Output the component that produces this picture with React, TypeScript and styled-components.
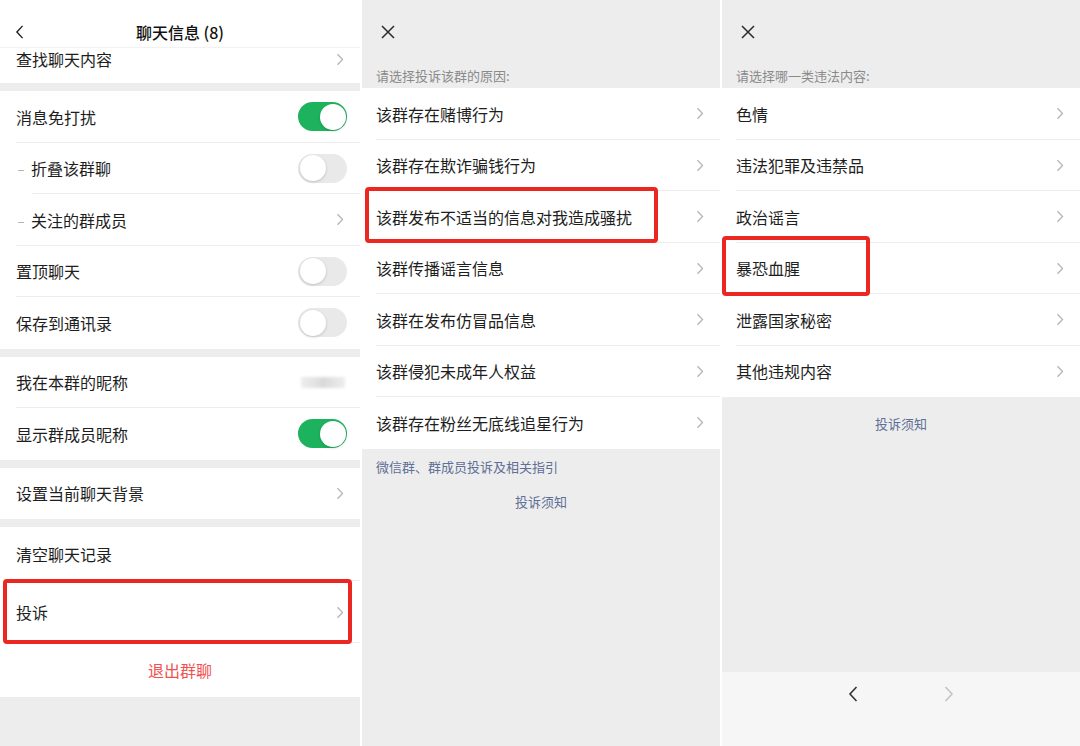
import React from 'react';
import styled, { createGlobalStyle } from 'styled-components';

const GlobalStyle = createGlobalStyle`
  html, body {
    margin: 0;
    padding: 0;
    background: #fff;
  }
  body {
    font-family: "Noto Sans CJK SC", "Noto Sans", "Liberation Sans", sans-serif;
    -webkit-font-smoothing: antialiased;
  }
`;

const Screen = styled.div`
  display: flex;
  gap: 2px;
  width: 1080px;
  height: 746px;
  background: #fff;
  overflow: hidden;
`;

const Panel = styled.div<{ $w: number }>`
  position: relative;
  display: flex;
  flex-direction: column;
  width: ${p => p.$w}px;
  flex-shrink: 0;
  background: #ededed;
`;

/* panel 1 */

const NavBar = styled.div`
  position: relative;
  display: flex;
  align-items: center;
  justify-content: center;
  height: 48px;
  padding-top: 16px;
  background: #fff;
  border-bottom: 1px solid #f2f2f2;
  box-sizing: border-box;
`;

const NavBack = styled.div`
  position: absolute;
  left: 15px;
  top: 25px;
  display: flex;
`;

const NavTitle = styled.div`
  font-size: 16px;
  font-weight: 500;
  color: #111;
`;

const Section = styled.div<{ $gap?: number }>`
  display: flex;
  flex-direction: column;
  margin-top: ${p => p.$gap ?? 8}px;
  background: #fff;
`;

const Row = styled.div<{ $h?: number; $indent?: number; $pad?: number; $lift?: number }>`
  position: relative;
  display: flex;
  align-items: center;
  height: ${p => p.$h ?? 51.5}px;
  padding: 0 16px ${p => p.$lift ?? 0}px ${p => p.$pad ?? 16}px;
  background: #fff;
  font-size: 16px;
  color: #1e1e1e;
  box-sizing: border-box;

  &:not(:last-child)::after {
    content: '';
    position: absolute;
    left: ${p => p.$indent ?? 16}px;
    right: 0;
    bottom: 0;
    height: 1px;
    background: #ededed;
  }
`;

const Label = styled.span`
  flex: 1;
  white-space: nowrap;
`;

const SubDash = styled.span`
  display: inline-block;
  width: 6px;
  height: 1px;
  margin: 0 7px 0 3px;
  background: #b5b5b5;
  vertical-align: middle;
`;

const Toggle = styled.div<{ $on?: boolean }>`
  position: relative;
  width: 49px;
  height: 29px;
  margin-right: -3px;
  border-radius: 15px;
  background: ${p => (p.$on ? '#1db35e' : '#e9e9e9')};

  &::after {
    content: '';
    position: absolute;
    top: 1.5px;
    ${p => (p.$on ? 'right: 1.5px;' : 'left: 1.5px;')}
    width: 26px;
    height: 26px;
    border-radius: 50%;
    background: #fff;
    box-shadow: 0 1px 3px rgba(0, 0, 0, 0.18);
  }
`;

const BlurredName = styled.div`
  width: 44px;
  height: 11px;
  margin-right: -1px;
  background: linear-gradient(90deg, #ededed 0%, #e2e2e2 35%, #d9d9d9 50%, #eeeeee 100%);
  filter: blur(1.5px);
`;

const DangerRow = styled(Row)`
  justify-content: center;
  color: #f05151;
`;

const Highlight = styled.div`
  position: absolute;
  border: 4px solid #ec2620;
  border-radius: 4px;
  box-sizing: border-box;
  pointer-events: none;
  z-index: 2;
`;

/* panels 2 & 3 */

const TopBar = styled.div`
  display: flex;
  align-items: center;
  height: 64px;
  padding-left: 19px;
`;

const Hint = styled.div`
  padding-left: 14px;
  font-size: 13px;
  line-height: 24px;
  color: #8a8a8a;
`;

const List = styled.div`
  display: flex;
  flex-direction: column;
  background: #fff;
`;

const LinkText = styled.div<{ $center?: boolean; $mt: number }>`
  margin-top: ${p => p.$mt}px;
  padding-left: ${p => (p.$center ? 0 : 14)}px;
  text-align: ${p => (p.$center ? 'center' : 'left')};
  font-size: 13px;
  line-height: 20px;
  color: #5f6f96;
`;

const Toolbar = styled.div`
  display: flex;
  justify-content: center;
  align-items: flex-start;
  gap: 86px;
  height: 74px;
  margin-top: auto;
  padding-top: 14px;
  box-sizing: border-box;
  background: #f6f6f6;
`;

const Chevron = ({ color = '#b5b5b5' }: { color?: string }) => (
  <svg width="8" height="13" viewBox="0 0 8 13" fill="none">
    <path d="M1.5 1.2L6.5 6.5L1.5 11.8" stroke={color} strokeWidth="1.3" />
  </svg>
);

const BackArrow = ({ color = '#222', w = 10, h = 16 }: { color?: string; w?: number; h?: number }) => (
  <svg width={w} height={h} viewBox="0 0 10 16" fill="none">
    <path d="M8.5 1L2 8L8.5 15" stroke={color} strokeWidth="1.6" />
  </svg>
);

const NextArrow = ({ color }: { color: string }) => (
  <svg width="10" height="16" viewBox="0 0 10 16" fill="none">
    <path d="M1.5 1L8 8L1.5 15" stroke={color} strokeWidth="1.6" />
  </svg>
);

const CloseIcon = () => (
  <svg width="14" height="14" viewBox="0 0 14 14" fill="none">
    <path d="M1 1L13 13M13 1L1 13" stroke="#2a2a2a" strokeWidth="1.5" />
  </svg>
);

const reasons = [
  '该群存在赌博行为',
  '该群存在欺诈骗钱行为',
  '该群发布不适当的信息对我造成骚扰',
  '该群传播谣言信息',
  '该群在发布仿冒品信息',
  '该群侵犯未成年人权益',
  '该群存在粉丝无底线追星行为',
];

const categories = ['色情', '违法犯罪及违禁品', '政治谣言', '暴恐血腥', '泄露国家秘密', '其他违规内容'];

export default function App() {
  return (
    <>
      <GlobalStyle />
      <Screen>
        <Panel $w={360}>
          <NavBar>
            <NavBack>
              <BackArrow w={9} h={14} />
            </NavBack>
            <NavTitle>聊天信息 (8)</NavTitle>
          </NavBar>
          <Section $gap={0}>
            <Row $h={35} $lift={13}>
              <Label>查找聊天内容</Label>
              <Chevron />
            </Row>
          </Section>

          <Section>
            <Row>
              <Label>消息免打扰</Label>
              <Toggle $on />
            </Row>
            <Row $indent={32} $pad={15}>
              <Label>
                <SubDash />
                折叠该群聊
              </Label>
              <Toggle />
            </Row>
            <Row $pad={15}>
              <Label>
                <SubDash />
                关注的群成员
              </Label>
              <Chevron />
            </Row>
            <Row>
              <Label>置顶聊天</Label>
              <Toggle />
            </Row>
            <Row>
              <Label>保存到通讯录</Label>
              <Toggle />
            </Row>
          </Section>

          <Section>
            <Row>
              <Label>我在本群的昵称</Label>
              <BlurredName />
            </Row>
            <Row>
              <Label>显示群成员昵称</Label>
              <Toggle $on />
            </Row>
          </Section>

          <Section>
            <Row>
              <Label>设置当前聊天背景</Label>
              <Chevron />
            </Row>
          </Section>

          <Section>
            <Row $h={54}>
              <Label>清空聊天记录</Label>
            </Row>
            <Row $h={62}>
              <Label>投诉</Label>
              <Chevron />
              <Highlight style={{ left: 3, right: 8, top: -2, bottom: -1 }} />
            </Row>
            <DangerRow $h={54} $lift={-3}>退出群聊</DangerRow>
          </Section>
        </Panel>

        <Panel $w={358}>
          <TopBar>
            <CloseIcon />
          </TopBar>
          <Hint>请选择投诉该群的原因:</Hint>
          <List>
            {reasons.map((r, i) => (
              <Row key={r} $pad={14} $indent={14}>
                <Label>{r}</Label>
                <Chevron />
                {i === 2 && <Highlight style={{ left: 3, width: 293, top: -4, height: 56 }} />}
              </Row>
            ))}
          </List>
          <LinkText $mt={8}>微信群、群成员投诉及相关指引</LinkText>
          <LinkText $mt={15} $center>
            投诉须知
          </LinkText>
        </Panel>

        <Panel $w={358}>
          <TopBar>
            <CloseIcon />
          </TopBar>
          <Hint>请选择哪一类违法内容:</Hint>
          <List>
            {categories.map((c, i) => (
              <Row key={c} $pad={14} $indent={14}>
                <Label>{c}</Label>
                <Chevron />
                {i === 3 && <Highlight style={{ left: 0, width: 148, top: -7, height: 60 }} />}
              </Row>
            ))}
          </List>
          <LinkText $mt={17} $center>
            投诉须知
          </LinkText>
          <Toolbar>
            <BackArrow color="#333" />
            <NextArrow color="#c4c4c4" />
          </Toolbar>
        </Panel>
      </Screen>
    </>
  );
}
